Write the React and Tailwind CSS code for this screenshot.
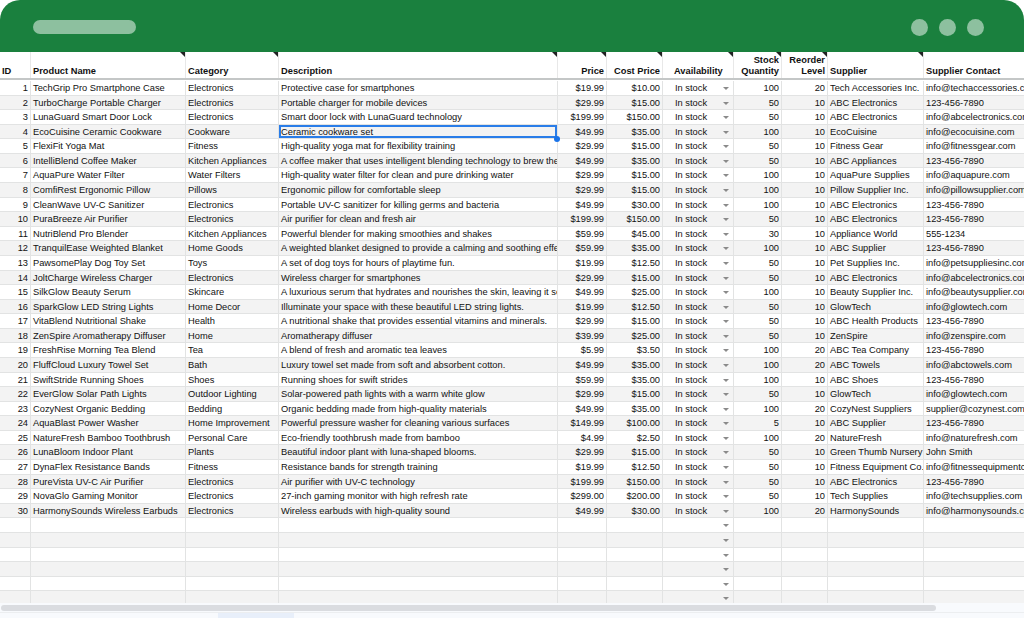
import React from 'react';

const columns = [
    { label: 'ID', width: 'w-[31px]', align: 'text-left' },
    { label: 'Product Name', width: 'w-[155px]', align: 'text-left', note: true },
    { label: 'Category', width: 'w-[93px]', align: 'text-left', note: true },
    { label: 'Description', width: 'w-[279px]', align: 'text-left', note: true },
    { label: 'Price', width: 'w-[49px]', align: 'text-right', note: true },
    { label: 'Cost Price', width: 'w-[56px]', align: 'text-right', note: true },
    { label: 'Availability', width: 'w-[71px]', align: 'text-left', note: true, pad: 'pl-[11px]' },
    { label: ['Stock', 'Quantity'], width: 'w-[48px]', align: 'text-right', note: true },
    { label: ['Reorder', 'Level'], width: 'w-[46px]', align: 'text-right', note: true },
    { label: 'Supplier', width: 'w-[96px]', align: 'text-left', note: true },
    { label: 'Supplier Contact', width: 'w-[130px]', align: 'text-left' },
];

const rows = [
    ['TechGrip Pro Smartphone Case', 'Electronics', 'Protective case for smartphones', '$19.99', '$10.00', 100, 20, 'Tech Accessories Inc.', 'info@techaccessories.com'],
    ['TurboCharge Portable Charger', 'Electronics', 'Portable charger for mobile devices', '$29.99', '$15.00', 50, 10, 'ABC Electronics', '123-456-7890'],
    ['LunaGuard Smart Door Lock', 'Electronics', 'Smart door lock with LunaGuard technology', '$199.99', '$150.00', 50, 10, 'ABC Electronics', 'info@abcelectronics.com'],
    ['EcoCuisine Ceramic Cookware', 'Cookware', 'Ceramic cookware set', '$49.99', '$35.00', 100, 10, 'EcoCuisine', 'info@ecocuisine.com'],
    ['FlexiFit Yoga Mat', 'Fitness', 'High-quality yoga mat for flexibility training', '$29.99', '$15.00', 50, 10, 'Fitness Gear', 'info@fitnessgear.com'],
    ['IntelliBlend Coffee Maker', 'Kitchen Appliances', 'A coffee maker that uses intelligent blending technology to brew the perfect cup', '$49.99', '$35.00', 50, 10, 'ABC Appliances', '123-456-7890'],
    ['AquaPure Water Filter', 'Water Filters', 'High-quality water filter for clean and pure drinking water', '$29.99', '$15.00', 100, 10, 'AquaPure Supplies', 'info@aquapure.com'],
    ['ComfiRest Ergonomic Pillow', 'Pillows', 'Ergonomic pillow for comfortable sleep', '$29.99', '$15.00', 100, 10, 'Pillow Supplier Inc.', 'info@pillowsupplier.com'],
    ['CleanWave UV-C Sanitizer', 'Electronics', 'Portable UV-C sanitizer for killing germs and bacteria', '$49.99', '$30.00', 100, 10, 'ABC Electronics', '123-456-7890'],
    ['PuraBreeze Air Purifier', 'Electronics', 'Air purifier for clean and fresh air', '$199.99', '$150.00', 50, 10, 'ABC Electronics', '123-456-7890'],
    ['NutriBlend Pro Blender', 'Kitchen Appliances', 'Powerful blender for making smoothies and shakes', '$59.99', '$45.00', 30, 10, 'Appliance World', '555-1234'],
    ['TranquilEase Weighted Blanket', 'Home Goods', 'A weighted blanket designed to provide a calming and soothing effect', '$59.99', '$35.00', 100, 10, 'ABC Supplier', '123-456-7890'],
    ['PawsomePlay Dog Toy Set', 'Toys', 'A set of dog toys for hours of playtime fun.', '$19.99', '$12.50', 50, 10, 'Pet Supplies Inc.', 'info@petsuppliesinc.com'],
    ['JoltCharge Wireless Charger', 'Electronics', 'Wireless charger for smartphones', '$29.99', '$15.00', 50, 10, 'ABC Electronics', 'info@abcelectronics.com'],
    ['SilkGlow Beauty Serum', 'Skincare', 'A luxurious serum that hydrates and nourishes the skin, leaving it soft', '$49.99', '$25.00', 100, 10, 'Beauty Supplier Inc.', 'info@beautysupplier.com'],
    ['SparkGlow LED String Lights', 'Home Decor', 'Illuminate your space with these beautiful LED string lights.', '$19.99', '$12.50', 50, 10, 'GlowTech', 'info@glowtech.com'],
    ['VitaBlend Nutritional Shake', 'Health', 'A nutritional shake that provides essential vitamins and minerals.', '$29.99', '$15.00', 50, 10, 'ABC Health Products', '123-456-7890'],
    ['ZenSpire Aromatherapy Diffuser', 'Home', 'Aromatherapy diffuser', '$39.99', '$25.00', 50, 10, 'ZenSpire', 'info@zenspire.com'],
    ['FreshRise Morning Tea Blend', 'Tea', 'A blend of fresh and aromatic tea leaves', '$5.99', '$3.50', 100, 20, 'ABC Tea Company', '123-456-7890'],
    ['FluffCloud Luxury Towel Set', 'Bath', 'Luxury towel set made from soft and absorbent cotton.', '$49.99', '$35.00', 100, 20, 'ABC Towels', 'info@abctowels.com'],
    ['SwiftStride Running Shoes', 'Shoes', 'Running shoes for swift strides', '$59.99', '$35.00', 100, 10, 'ABC Shoes', '123-456-7890'],
    ['EverGlow Solar Path Lights', 'Outdoor Lighting', 'Solar-powered path lights with a warm white glow', '$29.99', '$15.00', 50, 10, 'GlowTech', 'info@glowtech.com'],
    ['CozyNest Organic Bedding', 'Bedding', 'Organic bedding made from high-quality materials', '$49.99', '$35.00', 100, 20, 'CozyNest Suppliers', 'supplier@cozynest.com'],
    ['AquaBlast Power Washer', 'Home Improvement', 'Powerful pressure washer for cleaning various surfaces', '$149.99', '$100.00', 5, 10, 'ABC Supplier', '123-456-7890'],
    ['NatureFresh Bamboo Toothbrush', 'Personal Care', 'Eco-friendly toothbrush made from bamboo', '$4.99', '$2.50', 100, 20, 'NatureFresh', 'info@naturefresh.com'],
    ['LunaBloom Indoor Plant', 'Plants', 'Beautiful indoor plant with luna-shaped blooms.', '$29.99', '$15.00', 50, 10, 'Green Thumb Nursery', 'John Smith'],
    ['DynaFlex Resistance Bands', 'Fitness', 'Resistance bands for strength training', '$19.99', '$12.50', 50, 10, 'Fitness Equipment Co.', 'info@fitnessequipmentco.com'],
    ['PureVista UV-C Air Purifier', 'Electronics', 'Air purifier with UV-C technology', '$199.99', '$150.00', 50, 10, 'ABC Electronics', '123-456-7890'],
    ['NovaGlo Gaming Monitor', 'Electronics', '27-inch gaming monitor with high refresh rate', '$299.00', '$200.00', 50, 10, 'Tech Supplies', 'info@techsupplies.com'],
    ['HarmonySounds Wireless Earbuds', 'Electronics', 'Wireless earbuds with high-quality sound', '$49.99', '$30.00', 100, 20, 'HarmonySounds', 'info@harmonysounds.com'],
];

const cellBase = 'shrink-0 h-full border-r border-[#e2e3e3] overflow-hidden whitespace-nowrap leading-[14px]';

const Caret = () => (
    <svg width="6" height="3" viewBox="0 0 6 3" className="absolute right-[4px] top-[6px]">
        <polygon points="0,0 6,0 3,3" fill="#8a8a8a" />
    </svg>
);

const HeaderRow = () => (
    <div className="mb-[1px] flex h-[26px] shrink-0 box-content border-b-[2px] border-[#c4c7c7] bg-white text-[9.3px] font-bold text-[#111]">
        {columns.map((col, i) => (
            <div
                key={i}
                className={`relative flex shrink-0 flex-col justify-end whitespace-nowrap border-r border-[#e8e8e8] px-[2px] pb-[1px] leading-[11px] ${col.width} ${col.align} ${col.pad || ''}`}
            >
                {Array.isArray(col.label) ? col.label.map((l) => <div key={l}>{l}</div>) : <div>{col.label}</div>}
                {col.note && (
                    <span className="absolute right-0 top-0 h-[5px] w-[5px] bg-[#222] [clip-path:polygon(0_0,100%_0,100%_100%)]" />
                )}
            </div>
        ))}
    </div>
);

const DataRow = ({ index, row }) => {
    const striped = index % 2 === 1;
    const blank = !row;
    const [name, category, desc, price, cost, stock, reorder, supplier, contact] = row || [];
    const selected = index === 3;
    return (
        <div className={`flex h-[14.59px] shrink-0 border-b border-[#e2e3e3] text-[9.3px] text-[#111] ${striped ? 'bg-[#f3f3f3]' : 'bg-white'}`}>
            <div className={`${cellBase} w-[31px] pr-[2px] text-right`}>{blank ? '' : index + 1}</div>
            <div className={`${cellBase} w-[155px] pl-[2px]`}>{name}</div>
            <div className={`${cellBase} w-[93px] pl-[2px]`}>{category}</div>
            <div className={`${cellBase} relative w-[279px] pl-[2px]`}>
                {desc}
                {selected && <span className="absolute inset-0 border-2 border-[#2a7de8]" />}
            </div>
            <div className={`${cellBase} w-[49px] pr-[2px] text-right`}>{price}</div>
            <div className={`${cellBase} w-[56px] pr-[2px] text-right`}>{cost}</div>
            <div className={`${cellBase} relative w-[71px] pl-[12px]`}>
                {blank ? '' : 'In stock'}
                <Caret />
            </div>
            <div className={`${cellBase} w-[48px] pr-[2px] text-right`}>{stock}</div>
            <div className={`${cellBase} w-[46px] pr-[2px] text-right`}>{reorder}</div>
            <div className={`${cellBase} w-[96px] pl-[2px]`}>{supplier}</div>
            <div className={`${cellBase} w-[130px] border-r-0 pl-[2px]`}>{contact}</div>
        </div>
    );
};

const App = () => {
    const allRows = [...rows, null, null, null, null, null, null];

    return (
        <div className="flex h-[618px] w-[1024px] flex-col overflow-hidden bg-white [font-family:'Liberation_Sans',Arial,sans-serif]">
            <div className="flex h-[52px] shrink-0 items-center justify-between rounded-t-[20px] bg-[#1a803e] pl-[33px] pr-[40px] pt-[2px]">
                <div className="h-[14px] w-[103px] rounded-full bg-white/50" />
                <div className="flex gap-[11px]">
                    <div className="h-[17px] w-[17px] rounded-full bg-white/50" />
                    <div className="h-[17px] w-[17px] rounded-full bg-white/50" />
                    <div className="h-[17px] w-[17px] rounded-full bg-white/50" />
                </div>
            </div>

            <div className="relative h-[551px] w-[1100px] shrink-0 overflow-hidden">
                <HeaderRow />
                {allRows.map((row, i) => (
                    <DataRow key={i} index={i} row={row} />
                ))}
                <span className="absolute left-[554px] top-[84px] h-[6px] w-[6px] rounded-full bg-[#1a73e8]" />
            </div>

            <div className="flex-1 bg-[#f8fafd] pt-[2px]">
                <div className="ml-[1px] h-[6px] w-[935px] rounded-full bg-[#dadce0]" />
                <div className="mt-[1px] h-px w-full bg-[#eceef0]" />
                <div className="ml-[218px] h-[6px] w-[76px] bg-[#e8effa]" />
            </div>
        </div>
    );
};

export default App;
